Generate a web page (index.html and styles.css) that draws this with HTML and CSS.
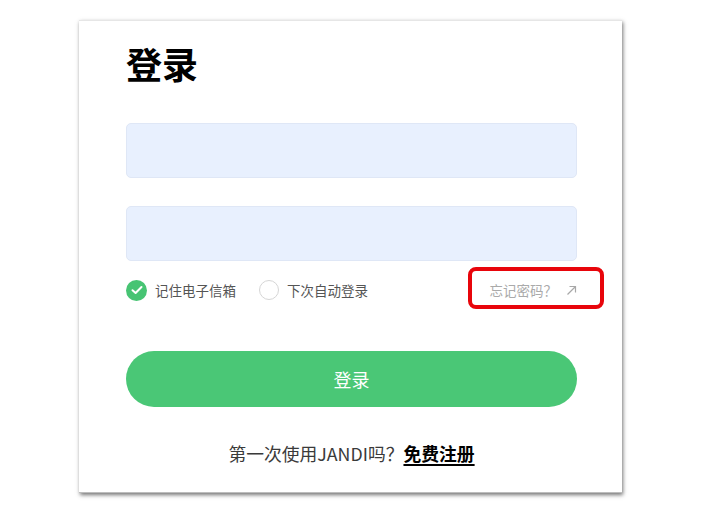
FILE: index.html
```html
<!DOCTYPE html>
<html lang="zh-CN">
<head>
<meta charset="utf-8">
<title>登录</title>
<link rel="stylesheet" href="styles.css">
</head>
<body>
<div class="page">
  <div class="card">
    <h1 class="title">登录</h1>
    <div class="field"></div>
    <div class="field field-second"></div>
    <div class="options">
      <label class="check">
        <span class="circle circle-on">
          <svg width="12" height="10" viewBox="0 0 12 10"><path d="M1.5 5.2 L4.6 8 L10.5 2" fill="none" stroke="#fff" stroke-width="2" stroke-linecap="round" stroke-linejoin="round"/></svg>
        </span>
        <span class="check-label">记住电子信箱</span>
      </label>
      <label class="check">
        <span class="circle"></span>
        <span class="check-label">下次自动登录</span>
      </label>
      <a class="forgot">忘记密码？
        <svg class="arrow" width="11" height="11" viewBox="0 0 11 11"><path d="M1.5 9.5 L9.5 1.5 M3.5 1.5 H9.5 V7.5" fill="none" stroke="#a8a8a8" stroke-width="1.2"/></svg>
        <span class="highlight"></span>
      </a>
    </div>
    <button class="submit">登录</button>
    <p class="signup">第一次使用JANDI吗？<a class="signup-link">免费注册</a></p>
  </div>
</div>
</body>
</html>
```
FILE: styles.css
```css
html, body {
  margin: 0;
  padding: 0;
  background: #fff;
}
body {
  font-family: "Noto Sans CJK SC", "Noto Sans", sans-serif;
}
.page {
  padding: 20px 0 25px 79px;
}
.card {
  width: 543px;
  height: 473px;
  box-sizing: border-box;
  padding: 20px 45px 0 47px;
  background: #fff;
  border-top: 1px solid #e6e6e6;
  border-bottom: 1px solid #bdbdbd;
  box-shadow: 1px 2px 4px rgba(0, 0, 0, 0.55);
}
.title {
  margin: 0;
  font-size: 36px;
  font-weight: 700;
  line-height: 44px;
  color: #000;
}
.field {
  margin-top: 38px;
  height: 55px;
  box-sizing: border-box;
  background: #e8f0fe;
  border: 1px solid #dfe7f6;
  border-radius: 5px;
}
.field-second {
  margin-top: 28px;
}
.options {
  display: flex;
  align-items: center;
  height: 20px;
  margin-top: 19px;
}
.check {
  display: flex;
  align-items: center;
  margin-right: 23px;
}
.circle {
  width: 20px;
  height: 20px;
  box-sizing: border-box;
  border-radius: 50%;
  border: 1px solid #d6d6d6;
  display: flex;
  align-items: center;
  justify-content: center;
  background: #fff;
}
.circle-on {
  width: 21px;
  height: 21px;
  border: none;
  background: #47c473;
}
.check-label {
  margin-left: 8px;
  font-size: 13.5px;
  color: #555;
  line-height: 20px;
}
.forgot {
  position: relative;
  margin-left: auto;
  display: flex;
  align-items: center;
  font-size: 13.5px;
  color: #aaa;
  line-height: 20px;
}
.arrow {
  margin-left: 9px;
}
.highlight {
  position: absolute;
  left: -22px;
  right: -27px;
  top: -13px;
  bottom: -9px;
  border: 4px solid #e8050b;
  border-radius: 8px;
}
.submit {
  display: block;
  width: 100%;
  height: 56px;
  margin-top: 51px;
  border: none;
  border-radius: 28px;
  background: #4ac776;
  color: #fff;
  font-family: inherit;
  font-size: 18px;
  padding: 0;
}
.signup {
  margin: 33px 0 0 0;
  text-align: center;
  font-size: 17.8px;
  line-height: 26px;
  color: #3a3a3a;
}
.signup-link {
  font-weight: 700;
  color: #000;
  text-decoration: underline;
  text-decoration-thickness: 2px;
  text-underline-offset: 3px;
}
```
